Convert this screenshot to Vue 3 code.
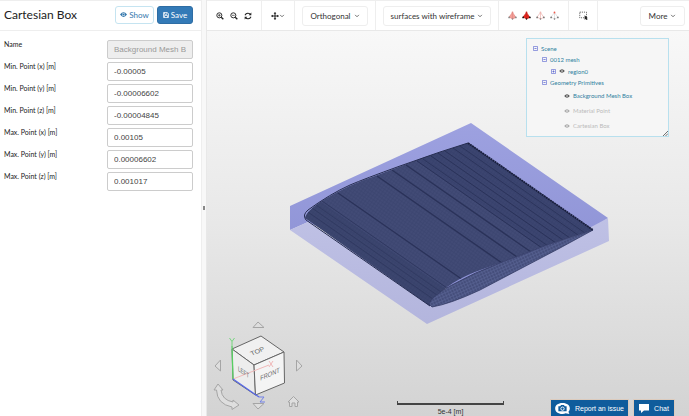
<script setup>
import { ref } from 'vue'

const fields = ref([
  { id: 'name', label: 'Name', value: 'Background Mesh Box', disabled: true },
  { id: 'minx', label: 'Min. Point (x) [m]', value: '-0.00005' },
  { id: 'miny', label: 'Min. Point (y) [m]', value: '-0.00006602' },
  { id: 'minz', label: 'Min. Point (z) [m]', value: '-0.00004845' },
  { id: 'maxx', label: 'Max. Point (x) [m]', value: '0.00105' },
  { id: 'maxy', label: 'Max. Point (y) [m]', value: '0.00006602' },
  { id: 'maxz', label: 'Max. Point (z) [m]', value: '0.001017' },
])

const tree = [
  { text: 'Scene', level: 0, box: 'minus' },
  { text: '0012 mesh', level: 1, box: 'minus' },
  { text: 'region0', level: 2, box: 'plus', eye: true },
  { text: 'Geometry Primitives', level: 1, box: 'minus' },
  { text: 'Background Mesh Box', level: 3, eye: true },
  { text: 'Material Point', level: 3, eye: true, off: true },
  { text: 'Cartesian Box', level: 3, eye: true, off: true },
]

const picks = [
  { name: 'Pick volumes', fill: '#f2a09a', edge: '#e58a83', dots: '#888' },
  { name: 'Pick faces', fill: '#e3221b', edge: '#c9251f', dots: '#111' },
  { name: 'Pick edges', fill: 'none', edge: '#efb5b1', dots: '#777' },
  { name: 'Pick nodes', fill: 'none', edge: '#dadada', dots: '#777', top: '#ee5a4c' },
]

// Where each spanwise mesh line leaves the far profile, with its weight
const meshLines = [
  [308, 212, 0.6], [312, 208, 0.5], [316, 205, 0.5], [322, 201, 0.7], [338, 193, 1.2],
  [377, 176, 1.4], [392, 170, 1.3], [406, 165, 1.3], [417, 161, 1], [423, 159, 0.8],
  [431, 156, 1], [438, 153, 0.9], [445, 151, 0.9], [453, 148, 0.9], [460, 146, 0.8],
]
</script>

<template>
  <div class="app">
    <aside class="panel">
      <header class="panel-head">
        <h1>Cartesian Box</h1>
        <button class="btn show" type="button">
          <svg class="eye" viewBox="0 0 14 10" aria-hidden="true">
            <path d="M0 5Q7-4.500 14 5Q7 14.500 0 5Z" fill="currentColor" />
            <circle cx="7" cy="5" r="3" fill="#fff" /><circle cx="7" cy="5" r="2.200" fill="currentColor" />
          </svg>
          Show
        </button>
        <button class="btn save" type="button">
          <svg class="disk" viewBox="0 0 12 12" fill="none" stroke="currentColor" stroke-width="1.500" aria-hidden="true">
            <path d="M1 1H8.500L11 3.500V11H1ZM3 1V4.500H8V1M3 11V7H9V11" />
          </svg>
          Save
        </button>
      </header>
      <form class="fields" @submit.prevent>
        <div v-for="f in fields" :key="f.id" class="field">
          <label :for="f.id">{{ f.label }}</label>
          <input :id="f.id" v-model="f.value" type="text" :disabled="f.disabled" />
        </div>
      </form>
    </aside>
    <div class="splitter"><span class="grip"></span></div>

    <main class="main">
      <nav class="toolbar">
        <div class="group zooms">
          <button class="tool" type="button" aria-label="Zoom in">
            <svg viewBox="0 0 12 12" fill="none" stroke="#222"><circle cx="5" cy="5" r="3.800" stroke-width="1.400" /><path d="M7.800 7.800L11 11" stroke-width="2" /><path d="M3 5H7M5 3V7" /></svg>
          </button>
          <button class="tool" type="button" aria-label="Zoom out">
            <svg viewBox="0 0 12 12" fill="none" stroke="#222"><circle cx="5" cy="5" r="3.800" stroke-width="1.400" /><path d="M7.800 7.800L11 11" stroke-width="2" /><path d="M3 5H7" /></svg>
          </button>
          <button class="tool" type="button" aria-label="Reset view">
            <svg viewBox="0 0 12 12" fill="none" stroke="#222" stroke-width="1.600"><path d="M1.500 5Q3 1.500 6 1.800Q8.500 2 10 4M10.500 7Q9 10.500 6 10.200Q3.500 10 2 8" /><path d="M11 .8V5H7ZM1 11.200V7H5Z" fill="#222" stroke="none" /></svg>
          </button>
        </div>
        <div class="group move">
          <button class="tool wide" type="button" aria-label="Move">
            <svg viewBox="0 0 12 12" stroke="#222" stroke-width="1.500"><path d="M6 1V11M1 6H11" /><path d="M6 0L8 2.800H4ZM6 12L8 9.200H4ZM0 6L2.800 4V8ZM12 6L9.200 4V8Z" fill="#222" stroke="none" /></svg>
            <svg class="caret" viewBox="0 0 8 8"><path d="M1.500 2.500L4 5L6.500 2.500" /></svg>
          </button>
        </div>
        <div class="group">
          <button class="drop ortho" type="button">Orthogonal <svg class="caret" viewBox="0 0 8 8"><path d="M1.500 2.500L4 5L6.500 2.500" /></svg></button>
        </div>
        <div class="group">
          <button class="drop surf" type="button">surfaces with wireframe <svg class="caret" viewBox="0 0 8 8"><path d="M1.500 2.500L4 5L6.500 2.500" /></svg></button>
        </div>
        <div class="group picks">
          <button v-for="p in picks" :key="p.name" class="tool pick" type="button" :aria-label="p.name">
            <svg viewBox="0 0 12 12">
              <path d="M6 2L10.500 8.500L6 10.500L1.500 8Z" :fill="p.fill" :stroke="p.edge" />
              <path d="M6 2V10.500" :stroke="p.edge" />
              <g :fill="p.dots"><circle cx="1.500" cy="8.500" r="1.200" /><circle cx="10.500" cy="8.500" r="1.200" /><circle cx="6" cy="10.500" r="1" /></g>
              <circle cx="6" cy="2" r="1.200" :fill="p.top || p.edge" />
            </svg>
          </button>
        </div>
        <div class="group select">
          <button class="tool pick" type="button" aria-label="Box select">
            <svg viewBox="0 0 12 12"><rect x="1" y="1.500" width="9" height="7.500" fill="none" stroke="#333" stroke-dasharray="1.500 1.300" /><path d="M7.500 5.500L12 9.500L10.400 9.700L11.300 12H10L9.200 10.500L7.500 11.500Z" fill="#222" /></svg>
          </button>
        </div>
        <button class="drop more" type="button">More <svg class="caret" viewBox="0 0 8 8"><path d="M1.500 2.500L4 5L6.500 2.500" /></svg></button>
      </nav>

      <section class="viewer">
        <svg class="scene" viewBox="207 31 482 385" role="img" aria-label="Wing mesh inside its bounding box">
          <defs>
            <linearGradient id="wall" x1="0" y1="0" x2="0" y2="1">
              <stop offset="0" stop-color="#9da1e0" /><stop offset="1" stop-color="#8b90d3" />
            </linearGradient>
            <linearGradient id="floor" x1="0" y1="0" x2="0" y2="1">
              <stop offset="0" stop-color="#bfc1e5" /><stop offset="1" stop-color="#b3b5dd" />
            </linearGradient>
            <pattern id="grain" width="3" height="3" patternUnits="userSpaceOnUse" patternTransform="rotate(35)">
              <rect width="3" height="3" fill="#424b76" /><path d="M0 .5H3M.5 0V3" stroke="#3b446e" stroke-width=".6" />
            </pattern>
            <pattern id="weave" width="3" height="3" patternUnits="userSpaceOnUse" patternTransform="rotate(-25)">
              <rect width="3" height="3" fill="#454e7b" /><path d="M0 .5H3M.5 0V3" stroke="#5b6595" stroke-width=".6" />
            </pattern>
            <clipPath id="wing">
              <path d="M305 218Q307 210 325 199Q350 184 375 176L425 157L468 143L593 230L550 244L500 263L475 272Q442 285 430 306Z" />
            </clipPath>
          </defs>
          <path d="M290 206L471 123L608 218L593 228L450 290L308 222L290 230Z" fill="url(#wall)" />
          <path d="M290 230L308 222L430 300L593 226L608 218L609 241L427 324Z" fill="url(#floor)" />
          <g clip-path="url(#wing)">
            <rect x="300" y="140" width="296" height="170" fill="url(#grain)" />
            <path d="M305 218L307 212L321 202L446 289L430 306Z" fill="#303b60" opacity=".35" />
            <path d="M417 161L468 143L593 230L542 248Z" fill="#2f3863" opacity=".3" />
            <line v-for="(l, i) in meshLines" :key="i" :x1="l[0]" :y1="l[1]" :x2="l[0] + 125" :y2="l[1] + 87" stroke="#2a3259" :stroke-width="l[2]" />
          </g>
          <path d="M429 304Q431 297 450 286Q475 272 500 263L550 244L593 230L560 248L520 269L480 290Q450 304 432 307Z" fill="url(#weave)" stroke="#333b64" stroke-width=".8" />
          <path d="M430 306L306 220Q302 215 308 210Q330 194 350 185Q364 179 400 166L440 152L468 143" fill="none" stroke="#262d50" />
          <path d="M468 143L593 230" stroke="#191f3d" stroke-width="1.800" stroke-dasharray="2 .5" />
        </svg>

        <div class="tree">
          <ul>
            <li v-for="n in tree" :key="n.text" :class="['lv' + n.level, { off: n.off }]">
              <svg v-if="n.box" class="node" viewBox="0 0 7 7" fill="none" stroke="#5560cf"><rect x=".5" y=".5" width="6" height="6" rx="1" /><path :d="n.box === 'plus' ? 'M2 3.500H5M3.500 2V5' : 'M2 3.500H5'" /></svg>
              <svg v-if="n.eye" class="see" viewBox="0 0 14 10"><path d="M0 5Q7-4 14 5Q7 14 0 5Z" fill="currentColor" /><circle cx="7" cy="5" r="2" fill="#f6f6f6" /></svg>
              <a href="#">{{ n.text }}</a>
            </li>
          </ul>
          <svg class="resize" viewBox="0 0 6 6"><path d="M0 6L6 0M3 6L6 3" stroke="#555" /></svg>
        </div>

        <svg class="cube" viewBox="210 318 96 92" role="img" aria-label="Orientation cube">
          <g fill="#dedede" stroke="#a5a5a5">
            <path d="M253 327.500L258 322L264 327.500Z" /><path d="M253 403.500L258 409L264 403.500Z" /><path d="M220.500 360L215 366L220.500 371Z" /><path d="M296.500 360L302 366L296.500 371Z" />
            <path d="M218 384L214 390H216.500Q217 404 232 407V409.500L239 405L233 400V402Q222 400 221 390H223Z" />
            <path d="M288 402L293.500 396.500L299 402H297.500V406.500H295V403H292V406.500H289.500V402Z" />
          </g>
          <g stroke="#666" stroke-width="1">
            <path d="M232 349L261 336L284 352L254 365Z" fill="#f0f0f0" /><path d="M232 349L254 365L255.500 395L233 380Z" fill="#ededed" /><path d="M254 365L284 352L284.500 383L255.500 395Z" fill="#f4f4f4" />
          </g>
          <path d="M233 379L269 365" stroke="#f0b8b8" /><path d="M269 361L273 367M273 361L269 367" stroke="#f0b8b8" />
          <g class="faces">
            <text transform="matrix(.95 -.4 .45 .75 258.500 353)">TOP</text>
            <text transform="matrix(.65 .45 0 1 243.500 374.500)">LEFT</text>
            <text transform="matrix(.8 -.35 0 1 270 376.500)">FRONT</text>
          </g>
          <path d="M233 379L232 346" stroke="#57cf62" stroke-width="1.300" /><path d="M229.500 338L232 341.500L234.500 338M232 341.500V346" fill="none" stroke="#76d57f" />
          <path d="M233 379L259 397" stroke="#5668e8" stroke-width="1.300" /><path d="M259 397H264L260 402H265" fill="none" stroke="#7180e8" />
        </svg>

        <div class="scale"><div class="rule"></div><span>5e-4 [m]</span></div>

        <div class="help">
          <button type="button" class="help-btn report">
            <svg class="cam" viewBox="0 0 16 12"><path d="M8 0C13 0 16 2.500 16 6Q16 8 14.500 9.500L15.500 12L11.500 11.200Q10 12 8 12C3 12 0 9.500 0 6S3 0 8 0Z" fill="#fff" /><path d="M3.500 3.500H5.500L6.500 2.200H9.500L10.500 3.500H12.500V9H3.500Z" fill="#0f5c9c" /><circle cx="8" cy="6.200" r="1.800" fill="none" stroke="#fff" /></svg>
            Report an issue
          </button>
          <button type="button" class="help-btn chat">
            <svg class="bubble" viewBox="0 0 10 9"><path d="M0 0H10V6.500H5L2 9V6.500H0Z" fill="#fff" /></svg>
            Chat
          </button>
        </div>
      </section>
    </main>
  </div>
</template>

<style>
body {
  margin: 0;
}
</style>

<style scoped>
.app {
  display: flex;
  height: 100vh;
  overflow: hidden;
  background: #fff;
  color: #333;
  font-family: Lato, sans-serif;
  font-size: 8px;
}
.app * {
  box-sizing: border-box;
}
button {
  display: flex;
  align-items: center;
  justify-content: center;
  margin: 0;
  padding: 0;
  border: 0;
  background: none;
  font: inherit;
  color: inherit;
  white-space: nowrap;
}
svg {
  display: block;
  flex: none;
}
.panel {
  flex: 0 0 202px;
  border-top: 1px solid #eee;
  border-right: 1px solid #eee;
}
.panel-head {
  display: flex;
  align-items: center;
  gap: 3px;
  height: 30px;
  padding: 0 8px 2px 4px;
  border-bottom: 1px solid #eee;
}
h1 {
  flex: 1;
  margin: 0;
  font-size: 12px;
  font-weight: 400;
  color: #222;
}
.btn {
  gap: 2px;
  height: 18px;
  border: 1px solid #c5e4f1;
  border-radius: 3px;
  color: #3478ad;
}
.show {
  width: 39px;
}
.save {
  width: 36px;
  border-color: #2e6da4;
  background: #337ab7;
  color: #fff;
}
.eye {
  width: 7px;
  height: 5px;
}
.disk {
  width: 6px;
  height: 6px;
}
.fields {
  display: flex;
  flex-direction: column;
  gap: 3px;
  padding: 9px 8px 0 4px;
}
.field {
  display: flex;
  justify-content: space-between;
}
label {
  font-size: 7px;
  line-height: 9px;
  color: #222;
}
.field input {
  width: 86px;
  height: 19px;
  padding: 0 6px;
  border: 1px solid #ccc;
  border-radius: 2px;
  background: #fff;
  color: #444;
  font: 8px "Liberation Sans", Arial, sans-serif;
}
.field input:disabled {
  background: #eee;
  color: #999;
}
.splitter {
  display: flex;
  flex: 0 0 5px;
  align-items: center;
  justify-content: center;
  border-right: 1px solid #e8e8e8;
  background: #f8f8f8;
}
.grip {
  width: 2px;
  height: 4px;
  background: #888;
}
.main {
  display: flex;
  flex: 1;
  flex-direction: column;
  min-width: 0;
}
.toolbar {
  display: flex;
  flex: 0 0 31px;
  border-top: 1px solid #eee;
  border-bottom: 1px solid #e8e8e8;
}
.group {
  display: flex;
  align-items: center;
  justify-content: center;
  padding: 0 7px;
  border-right: 1px solid #eee;
}
.zooms {
  gap: 6px;
  width: 55px;
}
.move {
  width: 33px;
}
.picks {
  gap: 5px;
  width: 70px;
}
.select {
  width: 29px;
}
.tool svg {
  width: 8px;
  height: 8px;
}
.tool.pick svg {
  width: 9px;
  height: 9px;
}
svg.caret,
.tool svg.caret {
  width: 6px;
  height: 6px;
  fill: none;
  stroke: #444;
}
.drop {
  gap: 3px;
  height: 20px;
  border: 1px solid #eee;
  border-radius: 3px;
}
.ortho {
  width: 66px;
}
.surf {
  width: 108px;
}
.more {
  align-self: center;
  width: 45px;
  margin: 0 4px 0 auto;
}
.viewer {
  position: relative;
  flex: 1;
  min-height: 0;
  background: linear-gradient(#f8f8f8, #e8e8e8 50%, #d3d3d3);
}
.scene {
  width: 100%;
  height: 100%;
}
.tree {
  position: absolute;
  top: 7px;
  right: 20px;
  width: 143px;
  padding: 4px 6px 3px;
  border: 1px solid #b8e0ee;
  background: #f6f6f6;
  font-size: 6px;
}
.tree ul {
  margin: 0;
  padding: 0;
  list-style: none;
}
.tree li {
  display: flex;
  align-items: center;
  gap: 3px;
  height: 11px;
}
.tree li.lv1 {
  padding-left: 9px;
}
.tree li.lv2 {
  height: 12px;
  padding-left: 18px;
}
.tree li.lv3 {
  height: 15px;
  padding-left: 31px;
}
.tree li {
  color: #555;
}
.tree li.off {
  color: #aaa;
}
.tree a {
  color: #2f7f9f;
  text-decoration: none;
}
.tree .off a {
  color: #bbb;
}
.node {
  width: 5px;
  height: 5px;
}
.see {
  width: 6px;
  height: 4px;
}
.resize {
  position: absolute;
  right: 0;
  bottom: 0;
  width: 5px;
  height: 5px;
}
.cube {
  position: absolute;
  bottom: 6px;
  left: 3px;
  width: 96px;
  height: 92px;
}
.faces {
  fill: #666;
  font: 7px "Liberation Sans", sans-serif;
  text-anchor: middle;
}
.scale {
  position: absolute;
  bottom: 1px;
  left: 190px;
  display: flex;
  flex-direction: column;
  align-items: center;
  gap: 3px;
  width: 107px;
  color: #333;
  font: 7px "Liberation Sans", sans-serif;
}
.rule {
  width: 100%;
  height: 4px;
  border: 1px solid #444;
  border-top: 0;
  border-bottom-width: 2px;
}
.help {
  position: absolute;
  right: 14px;
  bottom: 0;
  display: flex;
  gap: 4px;
}
.help-btn {
  gap: 5px;
  height: 17px;
  border: 1px solid #dccbbd;
  border-bottom: 0;
  background: #0f5c9c;
  color: #fff;
  font: 7px "Liberation Sans", sans-serif;
}
.report {
  width: 79px;
}
.chat {
  width: 42px;
}
.cam {
  width: 15px;
  height: 11px;
}
.bubble {
  width: 10px;
  height: 9px;
}
</style>
